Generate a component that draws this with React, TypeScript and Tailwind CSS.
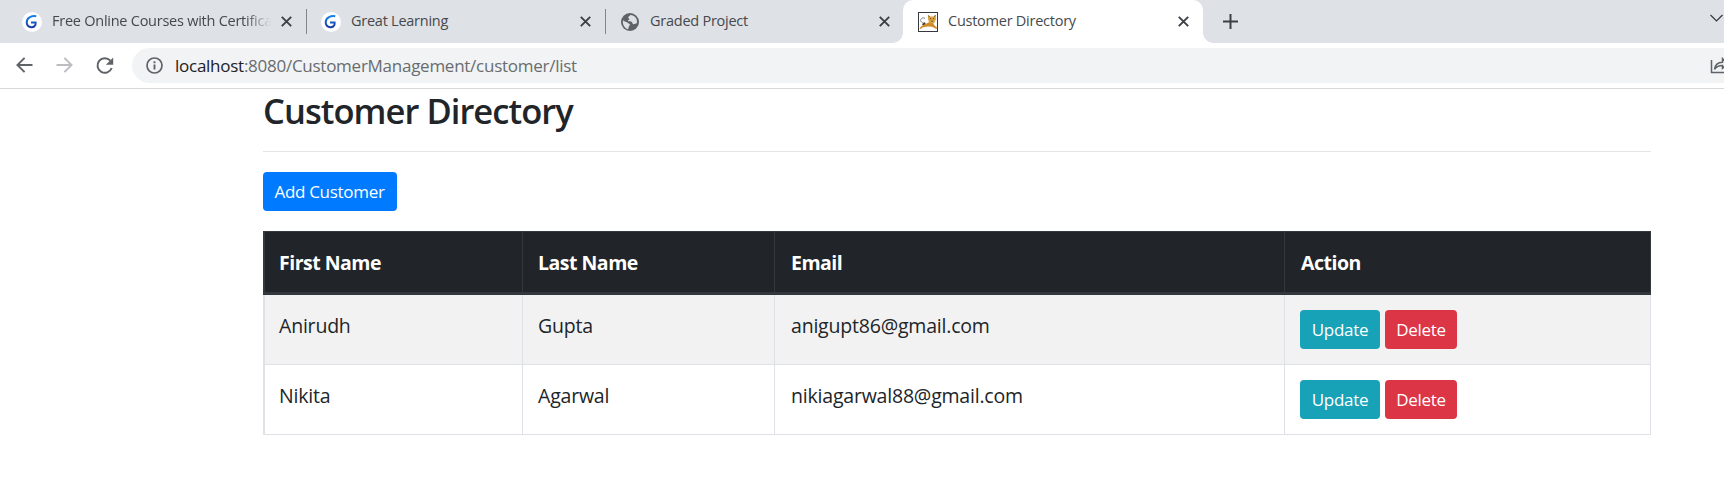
import type { ReactNode } from "react";

const customers = [
  { first: "Anirudh", last: "Gupta", email: "anigupt86@gmail.com" },
  { first: "Nikita", last: "Agarwal", email: "nikiagarwal88@gmail.com" },
];

function LearningIcon() {
  return (
    <svg className="size-5" viewBox="0 0 20 20" fill="none">
      <defs>
        <linearGradient id="learning" x1="0" y1="0" x2="0" y2="1">
          <stop offset="0" stopColor="#1583e6" />
          <stop offset="1" stopColor="#173aa8" />
        </linearGradient>
      </defs>
      <circle cx="10" cy="10" r="10" fill="#fff" />
      <path
        d="M14.300 4.300C10.200 3.500 4.700 5.200 4.700 10.300c0 5.200 6.600 6.400 8.500 3 .500-1 .500-1.800.400-2.900-1.600 0-3.100 0-4.600.100"
        stroke="url(#learning)"
        strokeWidth="2"
      />
    </svg>
  );
}

function GlobeIcon() {
  return (
    <svg className="size-[18px]" viewBox="0 0 18 18">
      <circle cx="9" cy="9" r="9" fill="#5f6368" />
      <path
        d="M2 7.200c1.400 1.800 4 1.400 4.600 2.600.5 1.100 2.200.6 2.300 1.800.1 1.300-1.500 1.600-1.300 2.900.1.700-.4 1.300-.7 1.700C3.600 15.300 1.300 11.300 2 7.200z"
        fill="#dee1e6"
      />
      <path
        d="M9.200 2c-.3 1.300-1.900 1.500-2 2.500-.1.900 1.300.9 1.200 1.800-.1.800-1.500.7-1.400 1.500.2 1 2.600.3 3.700 1 1.100.8.5 2.200 1.600 2.400 1.300.3 2.200-1 3.600-.9.900-4.700-2.300-8.400-6.700-8.300z"
        fill="#dee1e6"
      />
    </svg>
  );
}

function CatIcon() {
  return (
    <svg className="size-5" viewBox="0 0 20 20" fill="none">
      <rect x=".5" y=".5" width="19" height="19" fill="#fff" stroke="#35383c" />
      <path d="M7 6.300C4 4.800 1.800 7.500 3 9.500c.7 1.200 2.600 1.700 4 1.500" stroke="#777" strokeWidth=".9" />
      <path d="M4 12l3-1.500 1 2-3 1z" fill="#333" />
      <path d="M1.500 16.500c1.300-2.500 3.500-3.500 6-4.500l4-2 3.500.500 1.500 3 2.500 2-.5 1.500-4.500-2.200-4-.3-5 .8-2.500 1.700z" fill="#d18b28" />
      <path d="M10 3.200l2.300 1.300h3L17.600 3l.4 4-1.300 3.500-2.700 1.300-3-1.600-1-3z" fill="#d9a441" />
      <path d="M10.200 3.200l1.300 2M17.500 3l-1.200 2" stroke="#6a4b1d" strokeWidth=".8" />
      <path d="M12 6.700h1.200M15 6.700h1.200M13.300 9.200h1.600" stroke="#5b431d" strokeWidth=".9" />
    </svg>
  );
}

function CloseIcon() {
  return (
    <svg className="size-[11px] shrink-0" viewBox="0 0 11 11" fill="none" stroke="#3c4043" strokeWidth="1.900">
      <path d="M.8.8l9.400 9.400M10.200.8L.8 10.200" />
    </svg>
  );
}

function Tab({ icon, title, active, divided, faded }: { icon: ReactNode; title: string; active?: boolean; divided?: boolean; faded?: boolean }) {
  return (
    <div className={active ? "relative flex h-full w-[300px] items-center rounded-t-[10px] bg-white pr-[14px] pl-[15px]" : "relative flex h-full w-[299px] items-center pr-[15px] pl-[14px]"}>
      {active && (
        <>
          <span className="absolute bottom-0 -left-[10px] size-[10px] bg-[radial-gradient(circle_at_0_0,transparent_9.5px,white_10px)]" />
          <span className="absolute -right-[10px] bottom-0 size-[10px] bg-[radial-gradient(circle_at_100%_0,transparent_9.5px,white_10px)]" />
        </>
      )}
      <span className="flex w-5 shrink-0 justify-center">{icon}</span>
      <span
        className={
          faded
            ? "mb-[2px] ml-[10px] w-[219px] overflow-hidden mask-[linear-gradient(to_right,black_88%,transparent)] text-[14.5px] leading-5 tracking-[-0.25px] whitespace-nowrap text-[#45494d]"
            : "mb-[2px] ml-[10px] w-[219px] overflow-hidden text-[14.5px] leading-5 tracking-[-0.25px] whitespace-nowrap text-[#45494d]"
        }
      >
        {title}
      </span>
      <span className="ml-auto flex">
        <CloseIcon />
      </span>
      {divided && <span className="absolute top-[9px] right-0 h-[25px] w-px bg-[#80868b]" />}
    </div>
  );
}

function Button({ children, className }: { children: ReactNode; className: string }) {
  return (
    <button className={`flex h-[39px] items-center justify-center rounded-[4px] text-[17px] tracking-[-0.3px] text-white ${className}`}>
      {children}
    </button>
  );
}

const headCell = "h-[64px] border-t border-r border-b-[3px] border-[#32383e] pt-[2px] pr-[15px] text-left text-[19.5px] leading-[30px] font-bold tracking-[-0.5px] text-white";
const bodyCell = "h-[70px] border-r border-b border-[#dee2e6] pr-[15px] align-top text-[19.5px] leading-[30px] tracking-[-0.2px]";

export default function App() {
  return (
    <div className="h-[488px] w-[1724px] overflow-hidden bg-white font-['Open_Sans','Noto_Sans',sans-serif] text-[#212529]">
      <header>
        <div className="flex h-[43px] bg-[#dee1e6] pl-2">
          <Tab icon={<LearningIcon />} title="Free Online Courses with Certifica" divided faded />
          <Tab icon={<LearningIcon />} title="Great Learning" divided />
          <Tab icon={<GlobeIcon />} title="Graded Project" />
          <div className="-ml-[2px] h-full">
            <Tab icon={<CatIcon />} title="Customer Directory" active />
          </div>
          <svg className="mt-[14px] ml-5 size-[15px]" viewBox="0 0 15 15" stroke="#3c4043" strokeWidth="2">
            <path d="M7.500 0v15M0 7.500h15" />
          </svg>
          <svg className="mt-[14px] ml-auto h-[9px] w-[14px]" viewBox="0 0 14 9" fill="none" stroke="#35383b" strokeWidth="1.200">
            <path d="M.5 1l6 6 6-6" />
          </svg>
        </div>
        <div className="flex h-[46px] items-center border-b border-[#d5d7da] pb-px pl-4">
          <svg className="h-4 w-[17px]" viewBox="0 0 17 16" fill="none" stroke="#5f6368" strokeWidth="1.900">
            <path d="M16.500 8H1.500M8.600.8L1.400 8l7.200 7.200" />
          </svg>
          <svg className="ml-[23px] h-4 w-[17px]" viewBox="0 0 17 16" fill="none" stroke="#bbbdc0" strokeWidth="1.900">
            <path d="M.5 8h15M8.400.8L15.600 8l-7.200 7.200" />
          </svg>
          <svg className="ml-[22px] size-[19px]" viewBox="0 0 19 19" fill="none">
            <path d="M15.300 4.700A7.300 7.300 0 1 0 16.700 12" stroke="#5f6368" strokeWidth="2" />
            <path d="M18.200 1.500v7.300h-7.300z" fill="#5f6368" />
          </svg>
          <div className="ml-[18px] flex h-[35px] flex-1 items-center rounded-l-full bg-[#f1f3f4] pl-[14px]">
            <svg className="size-[17px]" viewBox="0 0 17 17" fill="none" stroke="#5f6368">
              <circle cx="8.500" cy="8.500" r="7.500" strokeWidth="1.700" />
              <path d="M8.500 7.500v5M8.500 4.300v1.900" strokeWidth="1.900" />
            </svg>
            <span className="mt-[2px] ml-3 text-[17px] tracking-[-0.26px] text-[#686c70]">
              <span className="text-[#202124]">localhost</span>:8080/CustomerManagement/customer/list
            </span>
            <svg className="ml-auto h-[18px] w-[14px]" viewBox="0 0 14 18" fill="none" stroke="#5f6368" strokeWidth="1.500">
              <path d="M1.500 4v12.500H14" />
              <path d="M4.500 13.300c.6-4.500 3.300-6.800 8-7V2.500l5 5-5 4.800V9.500c-3.800 0-6 1-8 3.800z" />
            </svg>
          </div>
        </div>
      </header>

      <main className="ml-[263px] w-[1388px]">
        <h1 className="h-[63px] border-b border-[#e5e5e5] text-[34.5px] leading-[44px] font-semibold tracking-[-0.95px]">Customer Directory</h1>
        <Button className="mt-5 mb-5 w-[134px] bg-[#007bff] pt-px pr-px">Add Customer</Button>
        <table className="w-full table-fixed border-separate border-spacing-0">
          <colgroup>
            <col className="w-[260px]" />
            <col className="w-[252px]" />
            <col className="w-[510px]" />
            <col className="w-[366px]" />
          </colgroup>
          <thead className="bg-[#212529]">
            <tr>
              <th className={`${headCell} border-l-2 pl-[14px]`}>First Name</th>
              <th className={`${headCell} pl-[15px]`}>Last Name</th>
              <th className={`${headCell} pl-4`}>Email</th>
              <th className={`${headCell} pl-4`}>Action</th>
            </tr>
          </thead>
          <tbody>
            {customers.map((c) => (
              <tr key={c.email} className="odd:bg-[#f2f2f2]">
                <td className={`${bodyCell} border-l-2 pt-4 pl-[14px]`}>{c.first}</td>
                <td className={`${bodyCell} pt-4 pl-[15px]`}>{c.last}</td>
                <td className={`${bodyCell} pt-4 pl-4`}>{c.email}</td>
                <td className={`${bodyCell} pt-[15px] pl-[15px]`}>
                  <div className="flex gap-[5px]">
                    <Button className="w-20 bg-[#17a2b8]">Update</Button>
                    <Button className="w-[72px] bg-[#dc3545]">Delete</Button>
                  </div>
                </td>
              </tr>
            ))}
          </tbody>
        </table>
      </main>
    </div>
  );
}
